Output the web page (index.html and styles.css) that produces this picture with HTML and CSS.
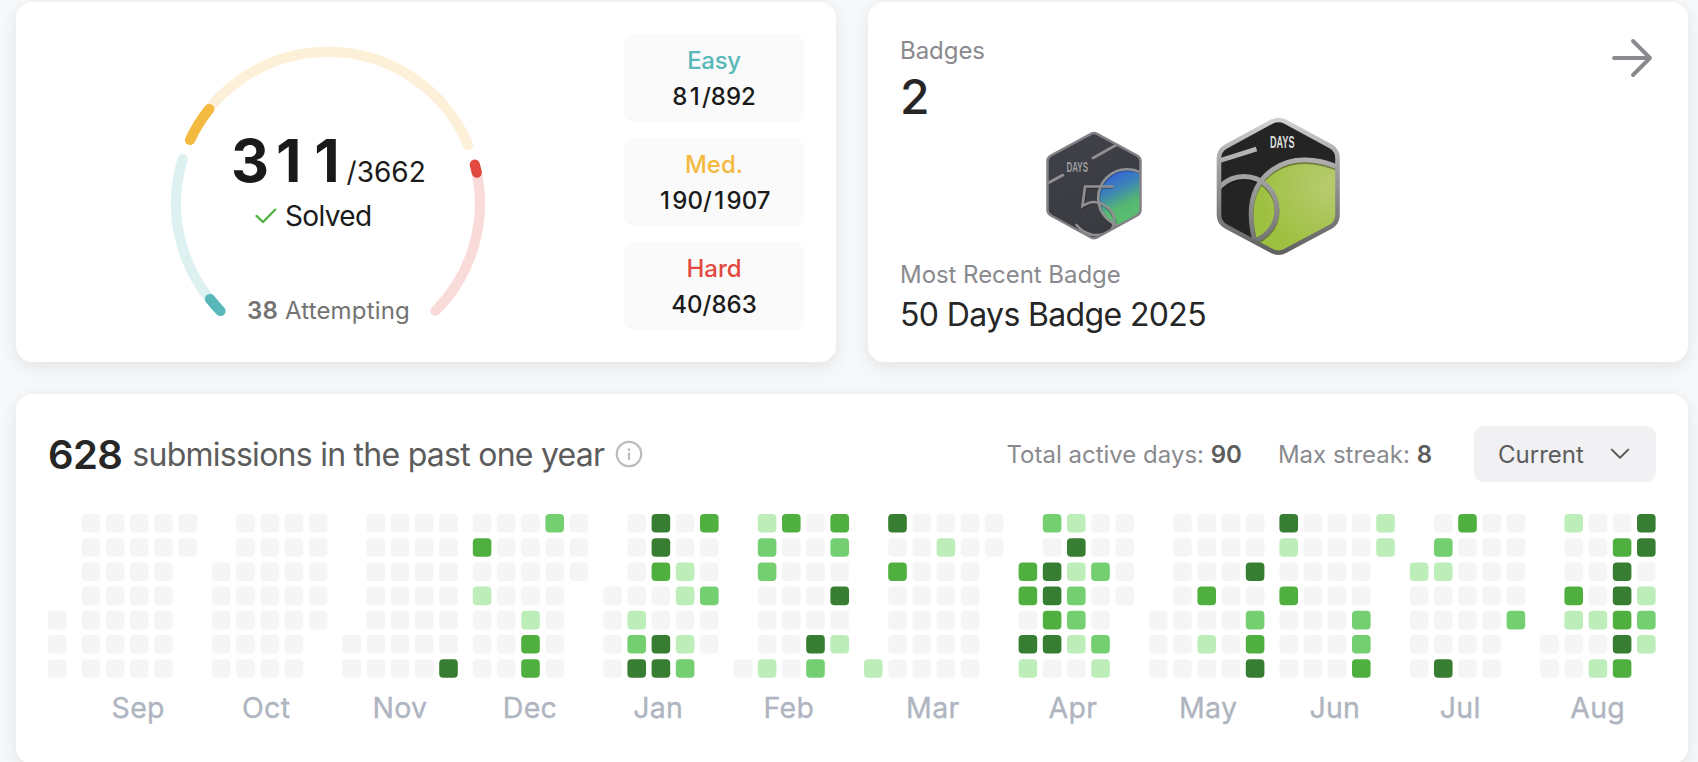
FILE: index.html
```html
<!DOCTYPE html>
<html lang="en">
<head>
<meta charset="utf-8">
<title>Profile overview</title>
<link rel="stylesheet" href="styles.css">
</head>
<body>
<main class="page">
  <div class="top-row">
    <section class="card solved-card">
      <div class="gauge">
        <svg class="gauge-ring" width="320" height="320" viewBox="0 0 320 320" fill="none" stroke-width="10.2" stroke-linecap="round">
          <path stroke="#ddf1f0" d="M52.5 267A152 152 0 0 1 14.7 115"/>
          <path stroke="#58b8b9" d="M52.5 267A152 152 0 0 1 42 255"/>
          <path stroke="#fdf0d8" d="M22 96A152 152 0 0 1 300.1 101"/>
          <path stroke="#f4b93f" d="M22 96A152 152 0 0 1 41.3 65"/>
          <path stroke="#f9dbda" d="M306.8 120.7A152 152 0 0 1 267.4 267"/>
          <path stroke="#e2493f" d="M306.8 120.7A152 152 0 0 1 308.8 128.7"/>
        </svg>
        <div class="gauge-text">
          <div class="total"><span class="total-solved">3<span class="one">1</span><span class="one">1</span></span><span class="total-all">/3662</span></div>
          <div class="solved">
            <svg width="22" height="16" viewBox="0 0 22 16" fill="none" stroke="#4caf3f" stroke-width="2.2" stroke-linecap="round" stroke-linejoin="round"><path d="M1.5 7.9 8 14 20.3 1.6"/></svg>
            <span class="solved-label">Solved</span>
          </div>
          <div class="attempting"><b>38</b> Attempting</div>
        </div>
      </div>
      <div class="levels">
        <div class="level"><span class="level-name easy">Easy</span><span class="level-count">8<span class="one">1</span>/892</span></div>
        <div class="level"><span class="level-name medium">Med.</span><span class="level-count"><span class="one">1</span>90/<span class="one">1</span>907</span></div>
        <div class="level"><span class="level-name hard">Hard</span><span class="level-count">40/863</span></div>
      </div>
    </section>

    <section class="card badges-card">
      <div class="badges-text">
        <div class="badges-head">
          <div>
            <div class="caption">Badges</div>
            <div class="badge-total">2</div>
          </div>
          <svg class="arrow" width="44" height="44" viewBox="0 0 44 44" fill="none" stroke="#8a8a8e" stroke-width="3.9" stroke-linecap="round" stroke-linejoin="round"><path d="M2 22H38M21 5 38 22 21 39"/></svg>
        </div>
        <div>
          <div class="caption">Most Recent Badge</div>
          <div class="recent-name">50 Days Badge 2025</div>
        </div>
      </div>
      <div class="badge-icons">
        <svg class="badge-small" width="98" height="110" viewBox="1045 131 98 110" fill="none">
          <defs>
            <linearGradient id="s-face" x1="0" y1="0" x2="0.3" y2="1"><stop offset="0" stop-color="#40414a"/><stop offset="1" stop-color="#3a3b40"/></linearGradient>
            <linearGradient id="s-fill" gradientUnits="userSpaceOnUse" x1="1107" y1="172" x2="1127" y2="213"><stop offset="0.05" stop-color="#3561d8"/><stop offset="0.45" stop-color="#3d86b4"/><stop offset="0.8" stop-color="#55b673"/><stop offset="1" stop-color="#58bd70"/></linearGradient>
            <clipPath id="s-clip"><path d="M1091 133.800Q1094 132.300 1097 133.800L1137 155.500Q1140.500 157.500 1140.500 161V210Q1140.500 213.500 1137 215.500L1097 237.500Q1094 239 1091 237.500L1051 215.500Q1047.500 213.500 1047.500 210V161Q1047.500 157.500 1051 155.500Z"/></clipPath>
          </defs>
          <g clip-path="url(#s-clip)">
            <rect x="1045" y="131" width="98" height="110" fill="url(#s-face)"/>
            <circle cx="1127" cy="198" r="29" fill="url(#s-fill)"/>
            <g stroke="#1c1d22" stroke-opacity="0.35" stroke-width="3" transform="translate(0.800 1)">
              <circle cx="1127" cy="198" r="29"/><path d="M1112 186.500H1084.500L1082.500 206Q1094 198 1104 205Q1114 212 1115 225"/>
            </g>
            <g stroke="#919194" stroke-width="2.600">
              <circle cx="1127" cy="198" r="28.800"/>
              <path d="M1112.500 186.500H1085L1082.500 206Q1094 198.500 1104 205Q1119 214 1112 229Q1106 236 1093 235Q1083 233 1076.500 225" stroke-linecap="round"/>
              <path d="M1048 183 1063 175M1093 158 1117 144.500" stroke-linecap="round"/>
            </g>
          </g>
          <path d="M1091 133.800Q1094 132.300 1097 133.800L1137 155.500Q1140.500 157.500 1140.500 161V210Q1140.500 213.500 1137 215.500L1097 237.500Q1094 239 1091 237.500L1051 215.500Q1047.500 213.500 1047.500 210V161Q1047.500 157.500 1051 155.500Z" stroke="#818285" stroke-width="2.500"/>
          <text class="badge-word" x="1066.500" y="171.500" font-size="14" fill="#9c9ca0" textLength="21.500" lengthAdjust="spacingAndGlyphs">DAYS</text>
        </svg>
        <svg class="badge-large" width="126" height="140" viewBox="1215 116 126 140" fill="none">
          <defs>
            <linearGradient id="l-rim" x1="0" y1="0" x2="0" y2="1"><stop offset="0" stop-color="#d0d0d0"/><stop offset="0.4" stop-color="#9c9c9c"/><stop offset="1" stop-color="#616161"/></linearGradient>
            <linearGradient id="l-line" gradientUnits="userSpaceOnUse" x1="1278" y1="145" x2="1278" y2="245"><stop offset="0" stop-color="#bababa"/><stop offset="1" stop-color="#707070"/></linearGradient>
            <radialGradient id="l-fill" gradientUnits="userSpaceOnUse" cx="1328" cy="185" r="70"><stop offset="0" stop-color="#b8cb70"/><stop offset="1" stop-color="#9dc040"/></radialGradient>
            <clipPath id="l-clip"><path d="M1272 121.500Q1278.500 118.500 1285 121.500L1331 146.500Q1337.500 150.500 1337.500 158V215Q1337.500 222.500 1331 226.500L1285 251Q1278.500 254.500 1272 251L1226 226.500Q1219 222.500 1219 215V158Q1219 150.500 1226 146.500Z"/></clipPath>
          </defs>
          <g clip-path="url(#l-clip)">
            <rect x="1215" y="116" width="126" height="140" fill="#242424"/>
            <path d="M1255 242C1246 207 1252 184 1273 169.500C1292 156 1318 158 1340 168V256H1255Z" fill="url(#l-fill)"/>
            <g stroke="#121212" stroke-opacity="0.4" stroke-width="5" transform="translate(0 1.500)">
              <path d="M1255 242C1246 207 1252 184 1273 169.500C1292 156 1318 158 1340 168"/><circle cx="1244" cy="209.500" r="33"/>
            </g>
            <g stroke="url(#l-line)" stroke-width="4.800">
              <path d="M1255 242C1246 207 1252 184 1273 169.500C1292 156 1318 158 1340 168"/>
              <circle cx="1244" cy="209.500" r="33"/>
              <path d="M1220 160.500Q1238 155 1256.500 149"/>
            </g>
          </g>
          <path d="M1272 121.500Q1278.500 118.500 1285 121.500L1331 146.500Q1337.500 150.500 1337.500 158V215Q1337.500 222.500 1331 226.500L1285 251Q1278.500 254.500 1272 251L1226 226.500Q1219 222.500 1219 215V158Q1219 150.500 1226 146.500Z" stroke="url(#l-rim)" stroke-width="4.600"/>
          <text class="badge-word" x="1270" y="147.800" font-size="16" fill="#dedede" textLength="24.500" lengthAdjust="spacingAndGlyphs">DAYS</text>
        </svg>
      </div>
    </section>
  </div>

  <section class="card activity-card">
    <header class="activity-head">
      <span class="sub-total">628</span>
      <span class="sub-label">submissions in the past one year</span>
      <svg class="info" width="28" height="28" viewBox="0 0 28 28" fill="none" stroke="#bcbcbe" stroke-width="2.200"><circle cx="14" cy="14" r="12.200"/><path d="M14 12.500V19.800"/><circle cx="14" cy="9.600" r="1.400" fill="#bcbcbe" stroke="none"/></svg>
      <div class="stats">
        <span class="stat stat-days">Total active days: <b>90</b></span>
        <span class="stat stat-streak">Max streak: <b>8</b></span>
        <button class="period"><span>Current</span>
          <svg width="20" height="12" viewBox="0 0 20 12" fill="none" stroke="#5c5c5c" stroke-width="2" stroke-linecap="round" stroke-linejoin="round"><path d="M1.800 1.600 10 9.800 18.200 1.600"/></svg>
        </button>
      </div>
    </header>
    <svg class="heatmap" id="heatmap" width="1608" height="220" viewBox="0 0 1608 220"></svg>
  </section>
</main>
<script src="heatmap.js"></script>
</body>
</html>
```
FILE: styles.css
```css
* { box-sizing: border-box; }
body {
  margin: 0;
  width: 1698px;
  height: 762px;
  overflow: hidden;
  background: #f7f8fa;
  font-family: Inter, "Liberation Sans", sans-serif;
  color: #262626;
}
.page { display: flex; flex-direction: column; gap: 32px; padding: 2px 10px 0 16px; }
.top-row { display: grid; grid-template-columns: 820px 820px; gap: 32px; }
.card { background: #fff; border-radius: 16px; box-shadow: 0 4px 16px rgba(0, 0, 0, 0.07), 0 8px 32px rgba(0, 0, 0, 0.025); }

.solved-card { height: 360px; display: flex; justify-content: space-between; padding: 32px 32px 32px 152px; }
.gauge { display: grid; width: 320px; height: 320px; margin-top: 10px; }
.gauge-ring, .gauge-text { grid-area: 1 / 1; }
.gauge-text { display: flex; flex-direction: column; align-items: flex-start; color: #1a1a1a; }
.one { padding: 0 0.1em; }
.total { margin: 81px 0 0 63px; height: 72px; line-height: 72px; white-space: nowrap; }
.total-solved { font-size: 59px; font-weight: 700; letter-spacing: 1px; }
.total-all { font-size: 28px; letter-spacing: 0; }
.solved { display: flex; align-items: center; height: 40px; gap: 8px; margin: -1px 0 0 87px; }
.solved-label { font-size: 28px; line-height: 40px; letter-spacing: -0.65px; }
.attempting { margin: 57px 0 0 79px; font-size: 24px; line-height: 36px; letter-spacing: 0.18px; color: #737373; white-space: nowrap; }
.attempting b { font-weight: 600; }
.levels { display: flex; flex-direction: column; gap: 16px; width: 180px; }
.level { display: flex; flex-direction: column; align-items: center; height: 88px; padding: 9px 8px 7px; background: #fafafa; border-radius: 10px; font-size: 24px; line-height: 36px; font-weight: 500; }
.level-name { letter-spacing: -0.3px; }
.easy { color: #58b8b9; }
.medium { color: #f4b93f; letter-spacing: 0; }
.hard { color: #e2493f; letter-spacing: 0; }
.level-count { color: #1a1a1a; }

.badges-card { height: 360px; display: grid; padding: 33px 32px 25px; }
.badges-text, .badge-icons { grid-area: 1 / 1; }
.badges-text { display: flex; flex-direction: column; justify-content: space-between; }
.badges-head { display: flex; justify-content: space-between; }
.caption { font-size: 24px; line-height: 32px; letter-spacing: -0.05px; color: #8a8a8e; }
.badge-total { font-size: 48px; line-height: 60px; font-weight: 500; }
.arrow { margin: 1px 0 0; }
.recent-name { margin-top: 2px; font-size: 32px; line-height: 44px; letter-spacing: -0.64px; }
.badge-icons { display: flex; align-items: flex-start; padding: 81px 0 0 145px; gap: 72px; }
.badge-small { margin-top: 15px; }
.badge-word { font-family: "Liberation Sans", sans-serif; font-weight: 700; }

.activity-card { height: 370px; padding: 32px; }
.activity-head { display: flex; align-items: center; height: 56px; white-space: nowrap; }
.sub-total { font-size: 40px; font-weight: 600; letter-spacing: -0.6px; }
.sub-label { margin-left: 10px; font-size: 32px; letter-spacing: -0.74px; color: #5c5c5c; }
.info { margin-left: 11px; }
.stats { margin-left: auto; display: flex; align-items: center; color: #8a8a8e; font-size: 24px; }
.stats b { font-weight: 600; color: #5c5c5c; }
.stat-streak { margin-left: 36px; }
.period { display: flex; align-items: center; justify-content: space-between; width: 182px; height: 56px; margin-left: 42px; padding: 0 26px 0 24px; border: 0; border-radius: 10px; background: #f1f1f4; color: #5c5c5c; font: 24px Inter, sans-serif; }
.heatmap { display: block; margin-top: 32px; }
.l0 { fill: #f5f5f5; }
.l1 { fill: #bdeeb9; }
.l2 { fill: #74cf70; }
.l3 { fill: #50b03f; }
.l4 { fill: #377e32; }
.month { font-size: 28.5px; letter-spacing: 0.3px; fill: #afb5c0; stroke: #afb5c0; stroke-width: 0.35px; }
```
FILE: heatmap.js
```js
// Rows run Sunday to Saturday; "." marks a day outside the month.
const months = [
  ["", ". . . . 0 0 0"],
  ["Sep", "00000 00000 0000. 0000. 0000. 0000. 0000."],
  ["Oct", ".0000 .0000 00000 00000 00000 0000. 0000."],
  ["Nov", ".0000 .0000 .0000 .0000 .0000 00000 00004"],
  ["Dec", "00020 30000 00000 1000. 0010. 0030. 0030."],
  ["Jan", ".0403 .0400 .0310 00012 01000 02410 0442."],
  ["Feb", ".1303 .2002 .2000 .0004 .0000 .0041 0102."],
  ["Mar", ".40000 .00100 .3000. .0000. .0000. .0000. 10000."],
  ["Apr", ".2100 .0400 34120 34200 0320. 4412. 1001."],
  ["May", ".0000 .0000 .0004 .0300 00002 00103 00004"],
  ["Jun", "40001 10001 0000. 3000. 0002. 0002. 0003."],
  ["Jul", ".0300 .2000 11000 00000 00002 0000. 0400."],
  ["Aug", ".1004 .0034 .0040 .3041 .1132 00041 0013."]
];
const SIZE = 18.6, PITCH = 24.2, MONTH_GAP = 15;
let x = 0, out = "";
for (const [name, data] of months) {
  const rows = data.split(" "), cols = rows[0].length;
  rows.forEach((row, r) => [...row].forEach((level, c) => {
    if (level === ".") return;
    out += `<rect class="l${level}" x="${(x + c * PITCH).toFixed(2)}" y="${(r * PITCH).toFixed(2)}" width="${SIZE}" height="${SIZE}" rx="4"/>`;
  }));
  const labelX = x + 30 + (cols - 5) * PITCH / 2;
  if (name) out += `<text class="month" x="${labelX.toFixed(2)}" y="203.6">${name}</text>`;
  x += (cols - 1) * PITCH + SIZE + MONTH_GAP;
}
document.getElementById("heatmap").innerHTML = out;
```
